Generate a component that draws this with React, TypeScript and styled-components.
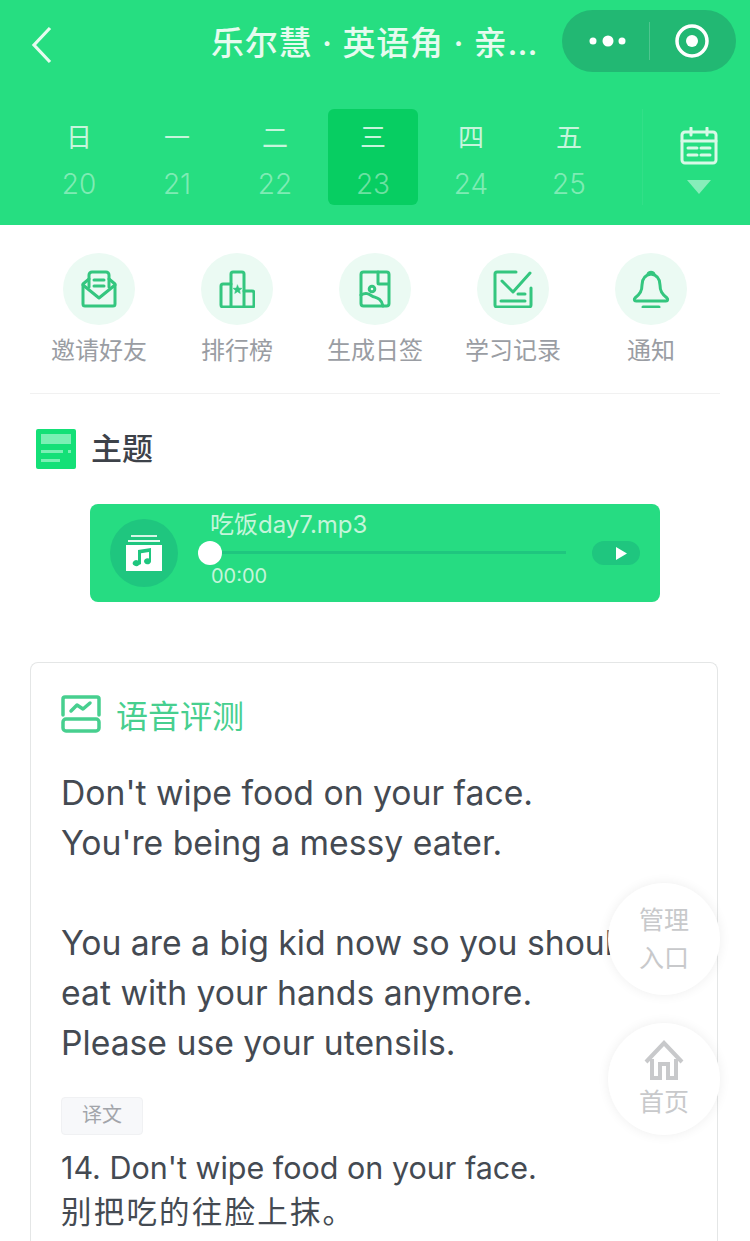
import { FC, ReactNode } from "react";
import styled, { createGlobalStyle } from "styled-components";

const GlobalStyle = createGlobalStyle`
  html, body {
    margin: 0;
    padding: 0;
    height: 1241px;
    overflow: hidden;
    background: #fff;
    font-family: Inter, "Noto Sans CJK SC", sans-serif;
  }
`;

const Page = styled.div`
  position: relative;
  width: 750px;
  height: 1241px;
  overflow: hidden;
  background: #fff;
`;

const Header = styled.header`
  height: 225px;
  background: #26de81;
  display: flex;
  flex-direction: column;
`;

const NavBar = styled.div`
  display: flex;
  align-items: flex-start;
  padding: 10px 14px 0 31px;
`;

const BackIcon = styled.svg`
  width: 22px;
  height: 38px;
  margin-top: 16px;
  flex: none;
`;

const Title = styled.div`
  margin-left: 158px;
  margin-top: 11px;
  color: #e6fbef;
  font-size: 33px;
  line-height: 44px;
  font-weight: 500;
  white-space: nowrap;
  letter-spacing: 0.8px;
`;

const Capsule = styled.div`
  margin-left: auto;
  width: 174px;
  height: 62px;
  box-sizing: border-box;
  border-radius: 31px;
  background: #22b873;
  display: flex;
  align-items: center;
`;

const MoreDots = styled.svg`
  margin-left: 6px;
`;

const CapsulePart = styled.div<{ $divided?: boolean }>`
  flex: 1;
  height: 38px;
  display: flex;
  align-items: center;
  justify-content: center;
  ${(p) => p.$divided && "border-left: 1px solid rgba(255, 255, 255, 0.2);"}
`;

const WeekBar = styled.div`
  display: flex;
  padding: 37px 0 0 30px;
`;

const DayCell = styled.div<{ $active?: boolean }>`
  width: 90px;
  height: 96px;
  margin: 0 4px;
  border-radius: 6px;
  display: flex;
  flex-direction: column;
  align-items: center;
  background: ${(p) => (p.$active ? "#07ce62" : "transparent")};
`;

const DayName = styled.span`
  margin-top: 11px;
  height: 36px;
  line-height: 36px;
  font-size: 26px;
  color: #c6f5dc;
`;

const DayNumber = styled.span`
  margin-top: 8px;
  line-height: 40px;
  font-size: 28px;
  font-weight: 300;
  color: rgba(255, 255, 255, 0.42);
`;

const CalendarToggle = styled.div`
  margin-left: 24px;
  flex: 1;
  height: 96px;
  border-left: 1px solid rgba(255, 255, 255, 0.06);
  display: flex;
  flex-direction: column;
  align-items: center;
  padding-left: 4px;
  padding-top: 18px;
  box-sizing: border-box;
`;

const ToggleArrow = styled.div`
  margin-top: 15px;
  width: 0;
  height: 0;
  border-left: 12px solid transparent;
  border-right: 12px solid transparent;
  border-top: 14px solid rgba(255, 255, 255, 0.45);
`;

const ActionRow = styled.nav`
  margin: 0 30px;
  height: 169px;
  box-sizing: border-box;
  border-bottom: 1px solid #f1f1f1;
  display: flex;
`;

const ActionItem = styled.div`
  width: 138px;
  display: flex;
  flex-direction: column;
  align-items: center;
  padding-top: 28px;
`;

const ActionCircle = styled.div`
  width: 72px;
  height: 72px;
  border-radius: 50%;
  background: #ebfaf3;
  display: flex;
  align-items: center;
  justify-content: center;
`;

const ActionLabel = styled.span`
  margin-top: 9px;
  font-size: 24px;
  line-height: 34px;
  color: #9a9da3;
  white-space: nowrap;
`;

const SectionHead = styled.div`
  display: flex;
  align-items: center;
  gap: 15px;
  padding: 35px 0 0 36px;
`;

const SectionTitle = styled.h2`
  margin: 0;
  font-size: 31px;
  line-height: 40px;
  font-weight: 500;
  color: #3d4249;
`;

const Player = styled.div`
  margin: 35px 0 0 90px;
  width: 570px;
  height: 98px;
  border-radius: 8px;
  background: #26dc82;
  display: flex;
  align-items: center;
  box-sizing: border-box;
  padding: 0 20px;
`;

const Disc = styled.div`
  width: 68px;
  height: 68px;
  border-radius: 50%;
  flex: none;
  background: #1fc67f;
  display: flex;
  align-items: center;
  justify-content: center;
`;

const TrackInfo = styled.div`
  width: 356px;
  margin-left: 32px;
  height: 98px;
  display: flex;
  flex-direction: column;
`;

const TrackName = styled.div`
  margin-top: 6px;
  font-size: 24px;
  line-height: 30px;
  color: #c4f5da;
  white-space: nowrap;
`;

const TrackLine = styled.div`
  position: relative;
  margin-top: 11px;
  height: 3px;
  background: #1fc67f;
`;

const Knob = styled.div`
  position: absolute;
  left: -12px;
  top: -10px;
  width: 24px;
  height: 24px;
  border-radius: 50%;
  background: #fff;
`;

const TrackTime = styled.div`
  margin-top: 8px;
  padding-left: 1px;
  font-size: 20px;
  line-height: 28px;
  color: #c4f5da;
`;

const PlayPill = styled.div`
  margin-left: 26px;
  width: 48px;
  height: 24px;
  border-radius: 12px;
  background: #1fc67f;
  display: flex;
  align-items: center;
  justify-content: flex-end;
  padding-right: 13px;
  box-sizing: border-box;
`;

const Card = styled.section`
  margin: 60px 0 0 30px;
  width: 688px;
  height: 640px;
  box-sizing: border-box;
  border: 1px solid #e4e6e6;
  border-bottom: none;
  border-radius: 8px 8px 0 0;
  padding: 32px 0 0 30px;
`;

const CardHead = styled.div`
  display: flex;
  align-items: center;
  gap: 15px;
  height: 38px;
`;

const CardTitle = styled.h3`
  margin: 0;
  font-size: 32px;
  font-weight: 400;
  color: #47cf8f;
`;

const Passage = styled.p`
  margin: 35px 0 0;
  font-size: 33.7px;
  line-height: 50px;
  color: #444a52;
  white-space: nowrap;
`;

const Tag = styled.div`
  margin-top: 29px;
  width: 82px;
  height: 38px;
  box-sizing: border-box;
  border: 1px solid #f0f1f3;
  border-radius: 4px;
  background: #f7f8fa;
  font-size: 20px;
  line-height: 34px;
  text-align: center;
  color: #a2a5aa;
`;

const Translation = styled.p`
  margin: 11px 0 0;
  font-size: 30.5px;
  line-height: 44px;
  color: #444a52;
  white-space: nowrap;
`;

const TranslationZh = styled.span`
  letter-spacing: 2.2px;
`;

const Fab = styled.div<{ $top: number }>`
  position: absolute;
  left: 608px;
  top: ${(p) => p.$top}px;
  width: 112px;
  height: 112px;
  border-radius: 50%;
  background: #fff;
  box-shadow: 0 0 12px rgba(0, 0, 0, 0.07);
  display: flex;
  flex-direction: column;
  align-items: center;
  justify-content: center;
  font-size: 25px;
  line-height: 38px;
  color: #c8c9cb;
`;

const HomeIcon = styled.svg`
  margin: 3px 0;
`;

const ACTION_GREEN = "#34c67f";

const IconStroke: FC<{ w: number; h: number; children: ReactNode }> = ({
  w,
  h,
  children,
}) => (
  <svg
    width={w}
    height={h}
    viewBox={`0 0 ${w} ${h}`}
    fill="none"
    stroke={ACTION_GREEN}
    strokeWidth="3"
    strokeLinecap="round"
    strokeLinejoin="round"
  >
    {children}
  </svg>
);

const InviteIcon = () => (
  <IconStroke w={36} h={38}>
    <path d="M8 17V5a3 3 0 0 1 3-3h14a3 3 0 0 1 3 3v12" />
    <path d="M8 9l-6 5v20a2 2 0 0 0 2 2h28a2 2 0 0 0 2-2V14l-6-5" />
    <path d="M2 15l16 13 16-13" />
    <path d="M13 10h10M13 16h10" />
  </IconStroke>
);

const RankIcon = () => (
  <IconStroke w={36} h={38}>
    <path d="M12 14H4a2 2 0 0 0-2 2v19a2 2 0 0 0 2 2h8" />
    <path d="M12 37V4a2 2 0 0 1 2-2h9a2 2 0 0 1 2 2v33z" />
    <path d="M25 21h8a2 2 0 0 1 2 2v12a2 2 0 0 1-2 2h-8" />
    <path
      d="M18.500 15l1.300 3 3.200.3-2.400 2.100.7 3.100-2.800-1.700-2.800 1.700.7-3.100-2.400-2.100 3.200-.3z"
      fill={ACTION_GREEN}
      strokeWidth="0.5"
    />
  </IconStroke>
);

const DiaryIcon = () => (
  <IconStroke w={32} h={38}>
    <rect x="2" y="2" width="28" height="34" rx="2.500" />
    <path d="M19 2v11a1 1 0 0 0 1 1h9" />
    <circle cx="13" cy="19" r="2.800" />
    <path d="M2 25c5-3 8-1 11 1s9 1 11 10" />
  </IconStroke>
);

const RecordIcon = () => (
  <IconStroke w={40} h={38}>
    <path d="M23 2H4a2 2 0 0 0-2 2v31a2 2 0 0 0 2 2h32a2 2 0 0 0 2-2V18" />
    <path d="M9 11l11 11L37 3" />
    <path d="M25 24h7M8 31h24" />
  </IconStroke>
);

const BellIcon = () => (
  <IconStroke w={38} h={38}>
    <path d="M19 4c-6 1-9 5-9 11 0 6-2 9-7 13-1 1-1 3 1 3h30c2 0 2-2 1-3-5-4-7-7-7-13 0-6-3-10-9-11z" />
    <path d="M16 4c1-2.500 5-2.500 6 0" />
    <path d="M11 37h16" />
  </IconStroke>
);

const ACTIONS = [
  { label: "邀请好友", icon: <InviteIcon /> },
  { label: "排行榜", icon: <RankIcon /> },
  { label: "生成日签", icon: <DiaryIcon /> },
  { label: "学习记录", icon: <RecordIcon /> },
  { label: "通知", icon: <BellIcon /> },
];

const DAYS = [
  { name: "日", date: 20 },
  { name: "一", date: 21 },
  { name: "二", date: 22 },
  { name: "三", date: 23, active: true },
  { name: "四", date: 24 },
  { name: "五", date: 25 },
];

export default function App() {
  return (
    <Page>
      <GlobalStyle />
      <Header>
        <NavBar>
          <BackIcon viewBox="0 0 22 38" fill="none" stroke="#e6fbef" strokeWidth="3.2">
            <path d="M19 2L3 19l16 17" />
          </BackIcon>
          <Title>乐尔慧 · 英语角 · 亲…</Title>
          <Capsule>
            <CapsulePart>
              <MoreDots width="40" height="14" viewBox="0 0 40 14" fill="#fff">
                <circle cx="5" cy="7" r="3.500" />
                <circle cx="20" cy="7" r="5.500" />
                <circle cx="34" cy="7" r="3.500" />
              </MoreDots>
            </CapsulePart>
            <CapsulePart $divided>
              <svg width="36" height="36" viewBox="0 0 36 36">
                <circle cx="17" cy="18" r="15" fill="none" stroke="#fff" strokeWidth="3.500" />
                <circle cx="17" cy="18" r="6" fill="#fff" />
              </svg>
            </CapsulePart>
          </Capsule>
        </NavBar>
        <WeekBar>
          {DAYS.map((d) => (
            <DayCell key={d.date} $active={d.active}>
              <DayName>{d.name}</DayName>
              <DayNumber>{d.date}</DayNumber>
            </DayCell>
          ))}
          <CalendarToggle>
            <svg width="38" height="38" viewBox="0 0 38 38" fill="none" stroke="#d8f9e7" strokeWidth="3" strokeLinecap="round">
              <rect x="2" y="5" width="34" height="31" rx="3" />
              <path d="M2 14h34M11 1v7M27 1v7" />
              <path d="M8 21h9M21 21h9M8 28h9M21 28h9" />
            </svg>
            <ToggleArrow />
          </CalendarToggle>
        </WeekBar>
      </Header>

      <ActionRow>
        {ACTIONS.map((a) => (
          <ActionItem key={a.label}>
            <ActionCircle>{a.icon}</ActionCircle>
            <ActionLabel>{a.label}</ActionLabel>
          </ActionItem>
        ))}
      </ActionRow>

      <SectionHead>
        <svg width="40" height="40" viewBox="0 0 40 40">
          <rect width="40" height="40" rx="2" fill="#14e077" />
          <rect x="5" y="5" width="30" height="10" fill="#7af0b4" />
          <rect x="5" y="21" width="22" height="3" fill="#7af0b4" />
          <rect x="32" y="21" width="3" height="3" fill="#7af0b4" />
          <rect x="5" y="30" width="19" height="3" fill="#7af0b4" />
        </svg>
        <SectionTitle>主题</SectionTitle>
      </SectionHead>

      <Player>
        <Disc>
          <svg width="38" height="36" viewBox="0 0 38 36">
            <rect x="6" y="0" width="26" height="2" fill="#d5f6e6" />
            <rect x="3" y="5" width="32" height="2" fill="#e6faef" />
            <rect x="1" y="10" width="36" height="26" fill="#fff" />
            <path
              d="M14 30a3.500 3 0 1 1-1-4.500V15l13-2v13.500a3.500 3 0 1 1-2-3V17l-8 1.200V29z"
              fill="#1fc67f"
            />
          </svg>
        </Disc>
        <TrackInfo>
          <TrackName>吃饭day7.mp3</TrackName>
          <TrackLine>
            <Knob />
          </TrackLine>
          <TrackTime>00:00</TrackTime>
        </TrackInfo>
        <PlayPill>
          <svg width="11" height="13" viewBox="0 0 11 13">
            <path d="M0 0l11 6.500L0 13z" fill="#fff" />
          </svg>
        </PlayPill>
      </Player>

      <Card>
        <CardHead>
          <svg width="40" height="38" viewBox="0 0 40 38" fill="none" stroke="#47cf8f" strokeWidth="3.500" strokeLinecap="round" strokeLinejoin="round">
            <path d="M2 20V4a2 2 0 0 1 2-2h32a2 2 0 0 1 2 2v16" />
            <path d="M10 16l6-6 6 4 7-6" />
            <rect x="2" y="24" width="36" height="12" rx="3" />
          </svg>
          <CardTitle>语音评测</CardTitle>
        </CardHead>
        <Passage>
          Don't wipe food on your face.
          <br />
          You're being a messy eater.
          <br />
          <br />
          You are a big kid now so you shouldn't
          <br />
          eat with your hands anymore.
          <br />
          Please use your utensils.
        </Passage>
        <Tag>译文</Tag>
        <Translation>
          14. Don't wipe food on your face.
          <br />
          <TranslationZh>别把吃的往脸上抹。</TranslationZh>
        </Translation>
      </Card>

      <Fab $top={883}>
        <span>管理</span>
        <span>入口</span>
      </Fab>
      <Fab $top={1023}>
        <HomeIcon width="40" height="40" viewBox="0 0 40 40" fill="none" stroke="#c8c9cb" strokeWidth="4">
          <path d="M2 22L20 3l18 19" />
          <path d="M8 19v19h8V24h8v14h8V19" />
        </HomeIcon>
        <span>首页</span>
      </Fab>
    </Page>
  );
}
